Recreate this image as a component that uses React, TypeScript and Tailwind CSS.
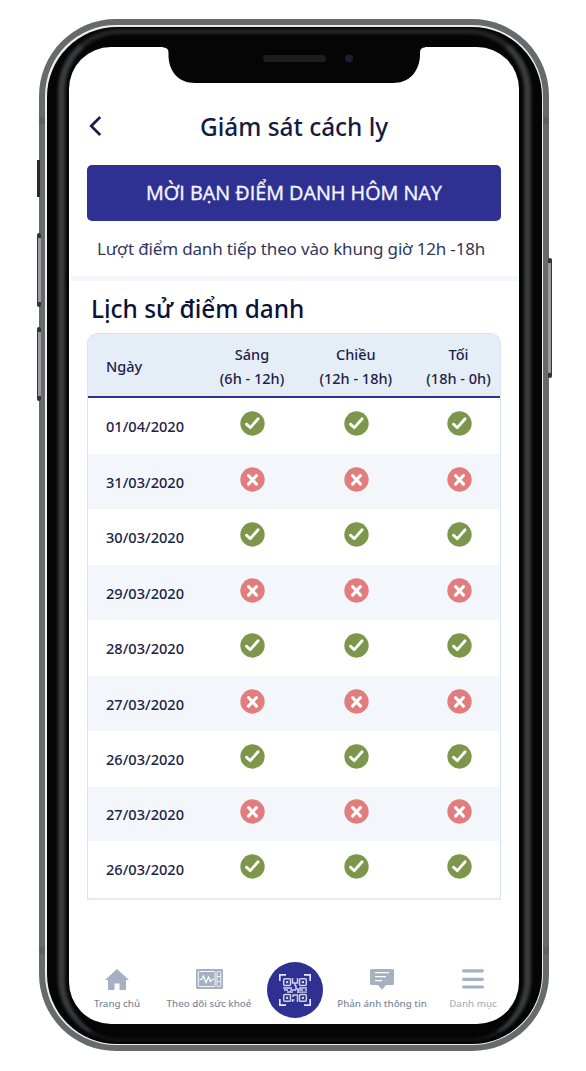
import React from 'react'
import clsx from 'clsx'

const font = "font-['Noto_Sans','Open_Sans',sans-serif]"

const history = [
  { date: '01/04/2020', present: true, height: 'h-[55.5px]' },
  { date: '31/03/2020', present: false, height: 'h-[55.5px]' },
  { date: '30/03/2020', present: true, height: 'h-[55.5px]' },
  { date: '29/03/2020', present: false, height: 'h-[55.5px]' },
  { date: '28/03/2020', present: true, height: 'h-[55.5px]' },
  { date: '27/03/2020', present: false, height: 'h-[55.5px]' },
  { date: '26/03/2020', present: true, height: 'h-[55.5px]' },
  { date: '27/03/2020', present: false, height: 'h-[54.5px]' },
  { date: '26/03/2020', present: true, height: 'h-[56px]' },
]

const sessions = [
  { name: 'Sáng', time: '(6h - 12h)' },
  { name: 'Chiều', time: '(12h - 18h)' },
  { name: 'Tối', time: '(18h - 0h)' },
]

const columns = 'grid grid-cols-[121.5px_85px_122.5px_83px]'

function StatusIcon({ present }: { present: boolean }) {
  return (
    <svg viewBox="0 0 24 24" className="h-[25px] w-[25px]" fill="none" stroke="#fff" strokeLinecap="round" strokeLinejoin="round">
      <circle cx="12" cy="12" r="11.7" fill={present ? '#7c974b' : '#e17d7d'} stroke="none" />
      {present ? (
        <path d="M6.2 12.6 L9.9 16 L17.4 7.4" strokeWidth="2.7" />
      ) : (
        <path d="M8.2 8.2 L15.8 16.4 M15.8 8.2 L8.2 16.4" strokeWidth="3" />
      )}
    </svg>
  )
}

function HomeIcon() {
  return (
    <svg viewBox="0 0 24 21" className="h-[21px] w-6" fill="#a5b1c2">
      <path d="M12 0 L24 11 H21 V20 Q21 21 20 21 H14.5 V14.5 H9.5 V21 H4 Q3 21 3 20 V11 H0 Z" />
    </svg>
  )
}

function MonitorIcon() {
  return (
    <svg viewBox="0 0 27 20" className="h-5 w-[27px]" fill="none" stroke="#fff">
      <rect width="27" height="20" rx="1" fill="#a5b1c2" stroke="none" />
      <rect x="2.3" y="2.5" width="16.7" height="15" rx="1" strokeWidth="0.9" />
      <path d="M3.5 10.5 H5.5 L7.5 7 L10 13.5 L12.5 8 L14.5 12.5 L16 10.5 H18" strokeWidth="1.2" />
      <rect x="21" y="2.5" width="3.8" height="15" rx="1" strokeWidth="0.8" />
      <path d="M21 7.5 H24.8 M21 12.5 H24.8" strokeWidth="0.8" />
    </svg>
  )
}

function FeedbackIcon() {
  return (
    <svg viewBox="0 0 24 21" className="h-[21px] w-6">
      <path d="M1.5 0 H22.5 Q24 0 24 1.5 V14.5 Q24 16 22.5 16 H16 L12 20.7 L8 16 H1.5 Q0 16 0 14.5 V1.5 Q0 0 1.5 0 Z" fill="#a5b1c2" />
      <path d="M5 3.7 H19 M5 7.7 H16 M5 11.7 H12" stroke="#fff" strokeWidth="1.3" />
    </svg>
  )
}

function MenuIcon() {
  return (
    <svg viewBox="0 0 22 20" className="h-5 w-[22px]" stroke="#a5b1c2" strokeWidth="3.2" strokeLinecap="round">
      <path d="M1.6 1.8 H20.4 M1.6 10.3 H20.4 M1.6 18 H20.4" />
    </svg>
  )
}

function QrIcon() {
  return (
    <svg viewBox="0 0 32 32" className="h-8 w-8" fill="none" stroke="#cfd0ea">
      <path d="M0.8 7 V0.8 H7 M25 0.8 H31.2 V7 M31.2 25 V31.2 H25 M7 31.2 H0.8 V25" stroke="#e6e7f5" strokeWidth="1.7" />
      <g strokeWidth="1.5">
        <rect x="4.7" y="4.7" width="6.8" height="6.8" rx="1" />
        <rect x="20.5" y="4.7" width="6.8" height="6.8" rx="1" />
        <rect x="4.7" y="20.5" width="6.8" height="6.8" rx="1" />
        <rect x="20.5" y="20.5" width="6.8" height="6.8" rx="1" />
        <path d="M13.5 4 V9 H16 V12 M18.5 4 V9 H16 M13.5 28 V26 H15.5 M18.5 28 V21 H14 V23 M16 12 H17 V15 H19 V19" />
      </g>
      <path d="M4 14 H13 M5 16 H9 M11 16 H17 M8 18 H14 M20 14 H28 M19 16 H24 M26 16 H28 M18 18.2 H28" strokeWidth="1.3" />
      <g fill="#cfd0ea" stroke="none">
        <rect x="7" y="7" width="2.2" height="2.2" />
        <rect x="22.8" y="7" width="2.2" height="2.2" />
        <rect x="7" y="22.8" width="2.2" height="2.2" />
        <rect x="22.8" y="22.8" width="2.2" height="2.2" />
      </g>
    </svg>
  )
}

function NavItem({ label, className, children }: { label: string; className: string; children: React.ReactNode }) {
  return (
    <div className={clsx('flex flex-col items-center text-[9.75px] font-medium whitespace-nowrap', className)}>
      <div className="flex h-7 items-start">{children}</div>
      <span className="leading-[14px]">{label}</span>
    </div>
  )
}

function HistoryTable() {
  return (
    <div className="ml-[18px] h-[567px] w-[414px] overflow-hidden rounded-t-[11px] border border-b-2 border-[#d3e5f4] border-b-[#e6ecf7]">
      <div className={clsx(columns, 'h-[64.25px] border-b-2 border-[#2e3192] bg-[#e5edf7] text-[14.5px] leading-6 font-medium text-[#1b2347]')}>
        <div className="flex items-center pt-px pl-[18px]">Ngày</div>
        {sessions.map((session) => (
          <div key={session.name} className="flex flex-col items-center pt-2 whitespace-nowrap">
            <span>{session.name}</span>
            <span>{session.time}</span>
          </div>
        ))}
      </div>
      {history.map((row, idx) => (
        <div key={idx} className={clsx(columns, 'items-center', row.height, idx % 2 === 1 && 'bg-[#f3f7fc]')}>
          <span className="pt-[2px] pl-[18px] text-[14.6px] font-medium text-[#1b2347]">{row.date}</span>
          {sessions.map((session) => (
            <div key={session.name} className="flex justify-center pb-[5px] pl-px">
              <StatusIcon present={row.present} />
            </div>
          ))}
        </div>
      ))}
    </div>
  )
}

function Screen() {
  return (
    <div className="relative flex h-[977px] w-[450px] flex-col overflow-hidden rounded-[42px] bg-white">
      {/* notch */}
      <svg viewBox="0 0 262 37" className="absolute -top-px left-[94px] h-[37px] w-[262px]">
        <path d="M0 0 H262 V1.500 Q257 1.500 257 6.500 V10 C256 26 246 37 230 37 H32 C16 37 6 26 5.500 10 V6.500 Q5.500 1.500 0 1.500 Z" fill="#050505" />
        <rect x="100" y="9" width="63" height="7" rx="3.500" fill="#1d1d1e" />
        <circle cx="186" cy="12.500" r="4" fill="#1b1b3c" />
      </svg>

      <header className="mt-[63.5px] flex h-[34.5px] items-center">
        <svg viewBox="0 0 13 20" className="-mt-[3px] ml-[20px] h-5 w-[13px]" fill="none" stroke="#141b45" strokeWidth="2.6">
          <path d="M11.200 1 L2.200 10 L11.200 19" />
        </svg>
        <h1 className="ml-[98px] text-[24.4px] font-medium whitespace-nowrap text-[#141b45]">Giám sát cách ly</h1>
      </header>

      <button className="mt-[20px] ml-[18px] h-[56px] w-[414px] shrink-0 rounded-[5px] bg-[#2e3192] font-['Open_Sans','Noto_Sans',sans-serif] text-[19.8px] font-medium whitespace-nowrap text-[#f4f5ff] [-webkit-text-stroke:0.4px_#f4f5ff]">
        MỜI BẠN ĐIỂM DANH HÔM NAY
      </button>
      <p className="mt-[15.5px] ml-[28px] h-[23.5px] text-[17px] leading-6 tracking-[-0.17px] whitespace-nowrap text-[#30375a]">
        Lượt điểm danh tiếp theo vào khung giờ 12h -18h
      </p>
      <div className="mt-4 ml-0.5 h-[5px] w-[447px] shrink-0 bg-[#f3f7fb]" />

      <h2 className="mt-[10px] ml-[22px] h-9 text-[24.4px] leading-9 font-medium whitespace-nowrap text-[#0c1238]">Lịch sử điểm danh</h2>
      <div className="mt-[6px]">
        <HistoryTable />
      </div>

      <nav className="mt-[62px] flex h-16 items-start text-[#7c879d]">
        <NavItem label="Trang chủ" className="ml-[8px] w-[80px] pt-[6.5px]">
          <HomeIcon />
        </NavItem>
        <NavItem label="Theo dõi sức khoẻ" className="w-[104px] pt-[6.5px]">
          <MonitorIcon />
        </NavItem>
        <div className="ml-[6px] flex h-14 w-14 items-center justify-center rounded-full bg-[#2e3192]">
          <QrIcon />
        </div>
        <NavItem label="Phản ánh thông tin" className="ml-[7px] w-[104px] pt-[6.5px]">
          <FeedbackIcon />
        </NavItem>
        <NavItem label="Danh mục" className="w-[78px] pt-[6.5px] text-[#a9b2c2]">
          <MenuIcon />
        </NavItem>
      </nav>
    </div>
  )
}

export default function App() {
  return (
    <main className={clsx(font, 'h-[1071px] w-[586px] overflow-hidden bg-white pt-[19px] pl-[39px]')}>
      <div className="relative h-[1032px] w-[510px] rounded-[77px] bg-[#68696d] p-[6px]">
        {/* side buttons */}
        <div className="absolute top-[141px] -left-[2px] h-[37px] w-[3px] bg-[#26282a]" />
        <div className="absolute top-[214px] -left-[2px] h-[74px] w-1 rounded-sm border-y-[5px] border-l border-[#333436] bg-[#999b9e]" />
        <div className="absolute top-[308px] -left-[2px] h-[74px] w-1 rounded-sm border-y-[5px] border-l border-[#333436] bg-[#999b9e]" />
        <div className="absolute top-[239px] -right-[3px] h-[120px] w-1 rounded-sm border-y-[5px] border-r border-[#333436] bg-[#999b9e]" />
        {/* antenna bands */}
        <div className="absolute top-[98px] left-0 h-[7px] w-full bg-[#5d5f63]" />
        <div className="absolute top-[928px] left-0 h-[7px] w-full bg-[#5d5f63]" />

        <div className="relative h-full w-full rounded-[71px] bg-[#eeeeef] p-[1.5px]">
          <div className="relative h-full w-full rounded-[70px] bg-[#050505] pt-[20.5px] pl-[22.5px]">
            <div className="absolute inset-x-[11px] top-[2px] bottom-[3px] rounded-[62px] border-x-[7px] border-t-[5px] border-b-2 border-x-[#3a3b3e] border-t-[#252526] border-b-[#1b1b1c] blur-[1.5px]" />
            <div className="relative">
              <Screen />
            </div>
          </div>
        </div>
      </div>
    </main>
  )
}
